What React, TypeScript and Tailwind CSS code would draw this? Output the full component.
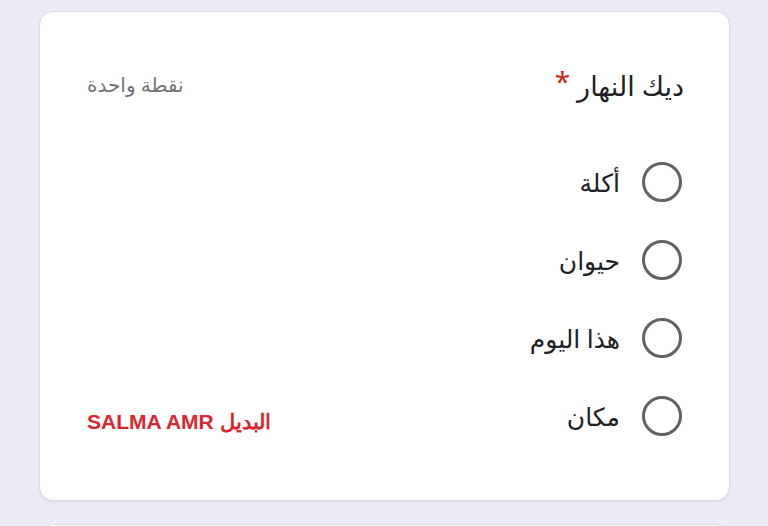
import React from "react";

const options = ["أكلة", "حيوان", "هذا اليوم", "مكان"];

function Radio() {
  return <div className="w-[40px] h-[40px] rounded-full border-[3px] border-[#5f6368] shrink-0" />;
}

export default function App() {
  return (
    <div
      className="w-[768px] h-[526px] overflow-hidden bg-[#eeebf8] pt-[11px] pl-[39px] pr-[38px]"
      style={{ fontFamily: '"Noto Sans", "DejaVu Sans", sans-serif' }}
    >
      <div dir="rtl" className="bg-white rounded-[14px] border border-[#dedbe6] shadow-[0_1px_2px_rgba(0,0,0,0.08)] h-[490px] pt-[55px] pr-[45px] pl-[47px]">
        <div className="flex items-center justify-between h-[36px]">
          <div className="flex items-center text-[27px] text-[#202124] leading-none">
            <span>ديك النهار</span>
            <span className="text-[#c8281e] mr-[7px] text-[28px] -mt-[8px]">*</span>
          </div>
          <div className="text-[20px] text-[#70757a]">نقطة واحدة</div>
        </div>
        <div className="flex flex-col gap-[38px] mt-[59px] pr-[2px]">
          {options.map((o, i) => (
            <div key={o} className="flex items-center justify-between h-[40px]">
              <div className="flex items-center gap-[22px]">
                <Radio />
                <span className="text-[25px] text-[#202124] leading-none">{o}</span>
              </div>
              {i === 3 && (
                <div
                  className="text-[21px] font-bold text-[#d9262f] mt-[12px]"
                  style={{ fontFamily: '"Liberation Sans", Arial, sans-serif' }}
                >
                  البديل SALMA AMR
                </div>
              )}
            </div>
          ))}
        </div>
      </div>
      <div className="mt-[23px] bg-white rounded-t-[14px] border border-[#dedbe6] h-[40px]" />
    </div>
  );
}
